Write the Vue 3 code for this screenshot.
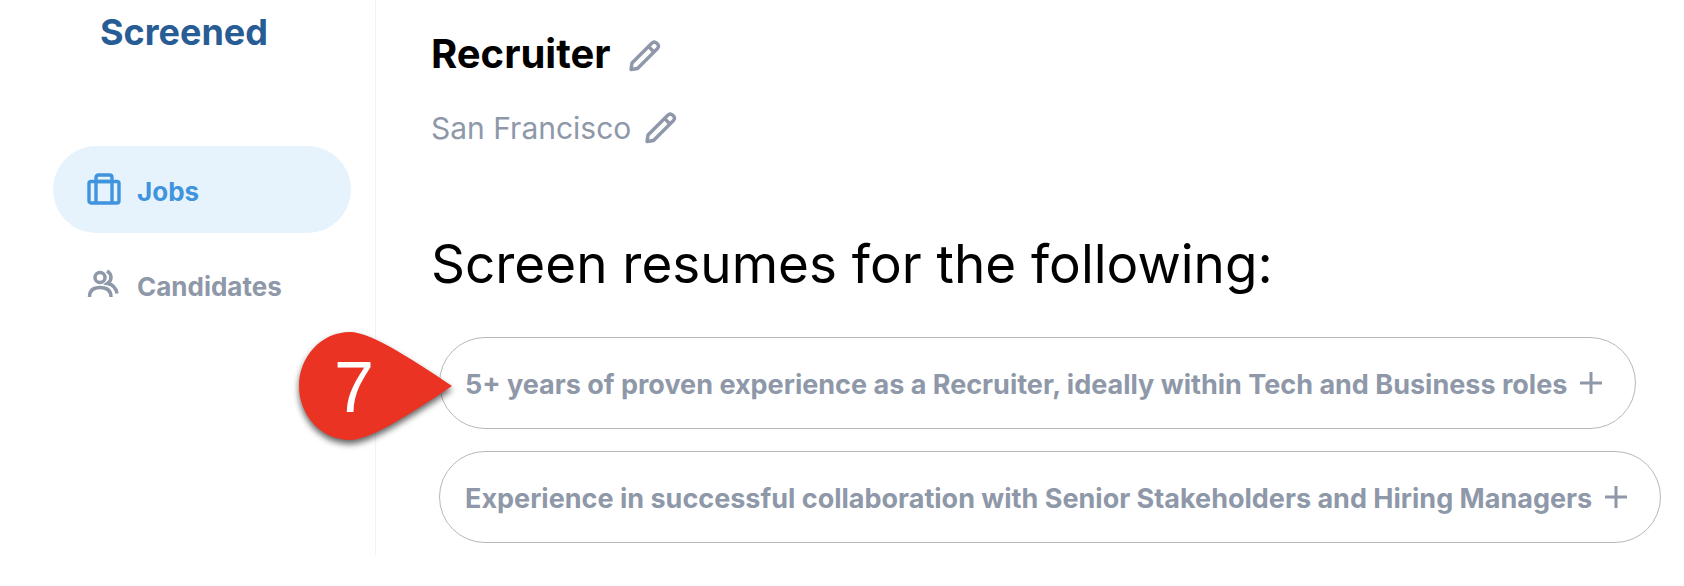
<script setup>
const criteria = [
  '5+ years of proven experience as a Recruiter, ideally within Tech and Business roles',
  'Experience in successful collaboration with Senior Stakeholders and Hiring Managers'
]
</script>

<template>
  <div class="page">
    <aside class="sidebar">
      <div class="logo">Screened</div>
      <nav class="nav">
        <a href="#jobs" class="item active" aria-current="page">
          <svg class="nav-icon" viewBox="0 0 34 34" fill="none" stroke="currentColor" stroke-width="3.400" stroke-linejoin="round" aria-hidden="true">
            <rect x="2" y="8.500" width="30" height="21.500" rx="2" />
            <path d="M9 30V4.500Q9 2 11.500 2H22.500Q25 2 25 4.500V30M9 8.500H25" />
          </svg>
          <span>Jobs</span>
        </a>
        <a href="#candidates" class="item">
          <svg class="nav-icon" viewBox="0 0 34 34" fill="none" stroke="currentColor" stroke-width="3.500" aria-hidden="true">
            <circle cx="13" cy="9.500" r="5" />
            <path d="M2.500 29C2.500 22.500 6 19.500 13 19.500S24 22.500 24 29" />
            <path d="M20 3C25 6 25.500 12 20.500 15.500C26 16.500 29 20 30 25.500" />
          </svg>
          <span>Candidates</span>
        </a>
      </nav>
    </aside>

    <main class="content">
      <div class="row">
        <h1 class="title">Recruiter</h1>
        <button class="edit" type="button" aria-label="Edit job title">
          <svg viewBox="0 0 32 32" fill="none" stroke="currentColor" stroke-width="3.400" stroke-linejoin="round" aria-hidden="true">
            <path d="M2 29.500L3 23L23 3Q25.500 1 27.500 3L28.500 4Q30.500 6 28.500 8.500L8.500 28.500Z" />
            <path d="M19.500 6.500L25 12" />
          </svg>
        </button>
      </div>
      <div class="row place">
        <p class="location">San Francisco</p>
        <button class="edit" type="button" aria-label="Edit location">
          <svg viewBox="0 0 32 32" fill="none" stroke="currentColor" stroke-width="3.400" stroke-linejoin="round" aria-hidden="true">
            <path d="M2 29.500L3 23L23 3Q25.500 1 27.500 3L28.500 4Q30.500 6 28.500 8.500L8.500 28.500Z" />
            <path d="M19.500 6.500L25 12" />
          </svg>
        </button>
      </div>
      <h2 class="heading">Screen resumes for the following:</h2>
      <ul class="criteria">
        <li v-for="(text, i) in criteria" :key="text">
          <button class="pill" type="button">
            <span class="label">{{ text }}</span>
            <svg class="plus" viewBox="0 0 24 24" fill="none" stroke="currentColor" stroke-width="3" aria-hidden="true">
              <path d="M12 1V23M1 12H23" />
            </svg>
          </button>
          <div v-if="i === 0" class="marker">
            <svg viewBox="0 0 154 108" aria-hidden="true">
              <path d="M153 54C120 32 73 0 51 0C22 0 0 25 0 54S22 108 51 108C73 108 120 76 153 54Z" fill="#ea3323" />
            </svg>
            <span>7</span>
          </div>
        </li>
      </ul>
    </main>
  </div>
</template>

<style>
body {
  margin: 0;
  background: #fff;
}
</style>

<style scoped>
.page {
  display: flex;
  font-family: Inter, "Liberation Sans", sans-serif;
  color: #000;
}
.sidebar {
  flex: 0 0 376px;
  box-sizing: border-box;
  padding: 8px 24px 0 53px;
  border-right: 1px solid #f1f2f3;
}
.logo {
  padding-left: 47px;
  font-size: 36px;
  line-height: 48px;
  font-weight: 700;
  color: #275d94;
}
.nav {
  display: flex;
  flex-direction: column;
  gap: 8px;
  margin-top: 90px;
}
.item {
  display: flex;
  align-items: center;
  gap: 16px;
  height: 87px;
  padding-left: 34px;
  border-radius: 44px;
  font-size: 26px;
  font-weight: 700;
  color: #8e98a9;
  text-decoration: none;
}
.item.active {
  background: #e6f3fc;
  color: #4093dd;
}
.item span {
  padding-top: 3px;
}
.nav-icon {
  width: 34px;
  height: 34px;
}
.content {
  flex: 1;
  min-width: 0;
  padding: 32px 20px 12px 55px;
}
.row {
  display: flex;
  align-items: center;
  gap: 18px;
  height: 48px;
}
.place {
  gap: 14px;
  margin-top: 24px;
}
.title,
.location,
.heading {
  margin: 0;
  font-weight: 400;
}
.title {
  font-size: 40px;
  line-height: 44px;
  padding-bottom: 4px;
  font-weight: 700;
}
.location {
  font-size: 30px;
  color: #8e98a9;
}
.heading {
  margin-top: 80px;
  font-size: 53px;
  line-height: 64px;
}
.edit {
  display: flex;
  padding: 0;
  border: 0;
  background: none;
  color: #8e98a9;
}
.edit svg {
  width: 32px;
  height: 32px;
}
.criteria {
  display: flex;
  flex-direction: column;
  align-items: flex-start;
  gap: 22px;
  margin: 41px 0 0;
  padding: 0 0 0 8px;
  list-style: none;
}
.criteria li {
  position: relative;
}
.pill {
  display: flex;
  align-items: center;
  gap: 12px;
  min-height: 92px;
  padding: 0 32px 0 25px;
  border: 1px solid #b8b8b8;
  border-radius: 46px;
  background: #fff;
  font: 700 27px/32px Inter, "Liberation Sans", sans-serif;
  color: #8e98a9;
  white-space: nowrap;
}
.label {
  padding-top: 4px;
}
.plus {
  flex: none;
  width: 24px;
  height: 24px;
}
.marker {
  position: absolute;
  left: -140px;
  top: -5px;
  width: 154px;
  height: 108px;
  filter: drop-shadow(0 4px 3px rgba(0, 0, 0, 0.6));
}
.marker svg {
  display: block;
  width: 100%;
  height: 100%;
}
.marker span {
  position: absolute;
  inset: 0 48px 0 4px;
  text-align: center;
  font: 72px/110px "Liberation Sans", sans-serif;
  color: #fff;
}
</style>
